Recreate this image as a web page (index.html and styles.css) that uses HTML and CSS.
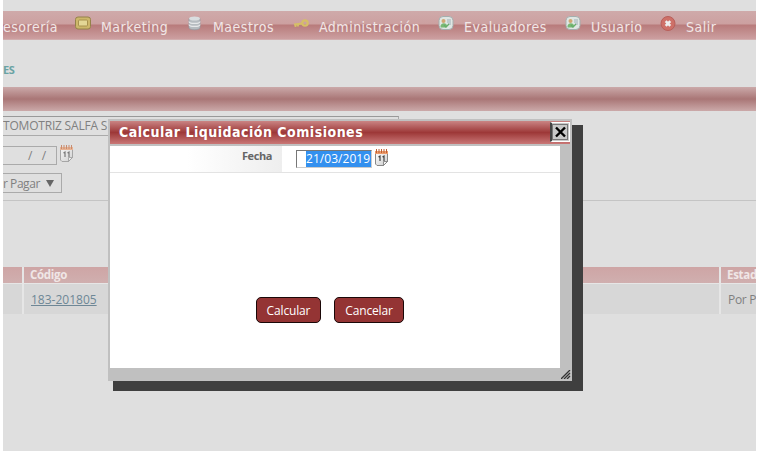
FILE: index.html
```
<!DOCTYPE html>
<html lang="es">
<head>
<meta charset="utf-8">
<title>Liquidación Comisiones</title>
<link rel="stylesheet" href="styles.css">
</head>
<body>
<svg class="defs" width="0" height="0">
  <defs>
    <linearGradient id="paper" x1="0" y1="0" x2="1" y2="1"><stop offset="0" stop-color="#fff"/><stop offset="1" stop-color="#ccc"/></linearGradient>
    <symbol id="calendar" viewBox="0 0 15 18">
      <path d="M1.500 3.500h12v9l-4 4h-6.500l-1.500-1.500z" fill="url(#paper)" stroke="#888"/>
      <path d="M13.500 12.500h-4v4z" fill="#f4f4f4" stroke="#777" stroke-width=".8"/>
      <path d="M1 2h13v3H1z" fill="#ee9c6c"/>
      <path d="M2.500 0v4M5 0v4M7.500 0v4M10 0v4M12.500 0v4" stroke="#bd5f33" stroke-width="1"/>
      <path d="M4.500 8l1.500-1v5M8.500 8l1.500-1v5" fill="none" stroke="#444" stroke-width="1.200"/>
    </symbol>
    <symbol id="card" viewBox="0 0 16 16">
      <rect x="1" y=".5" width="14" height="13" rx="4" fill="#dfe6e3" stroke="#a4afae"/>
      <circle cx="5.500" cy="5" r="2" fill="#d0a873"/>
      <path d="M2.500 11C2 7 8 6 9 9.500l-1 2H3z" fill="#79b874"/>
      <path d="M9 4h4M9 6h4M10 8h3" stroke="#9db0b6"/>
      <path d="M6 9l2 2 3-3" fill="none" stroke="#66ae6a" stroke-width="1.300"/>
    </symbol>
  </defs>
</svg>
<main class="app">
  <nav class="menu">
    <span class="item first"><b>esorería</b></span>
    <span class="item"><svg width="16" height="16" viewBox="0 0 16 16"><rect x=".5" y="1" width="15" height="12" rx="2.500" fill="#cdb76a" stroke="#94824a"/><rect x="3.500" y="4" width="9" height="6" rx="1" fill="#e3d796" stroke="#a8924e"/></svg><b>Marketing</b></span>
    <span class="item"><svg width="16" height="16" viewBox="0 0 16 16"><path d="M2 2.500v9c0 3 11 3 11 0v-9z" fill="#b6bcc0" stroke="#9299a0" stroke-width=".7"/><ellipse cx="7.500" cy="2.500" rx="5.500" ry="2" fill="#d9dddf"/><path d="M2 5.500c0 2.600 11 2.600 11 0M2 8.500c0 2.600 11 2.600 11 0" fill="none" stroke="#e6e8e9" stroke-width="1.200"/></svg><b>Maestros</b></span>
    <span class="item"><svg width="16" height="16" viewBox="0 0 16 16"><circle cx="12" cy="7" r="2.700" fill="none" stroke="#d6bf66" stroke-width="2.200"/><path d="M9.500 7.500L1 8.500M2.500 8.500v2.500M5 8v2.500" fill="none" stroke="#d6bf66" stroke-width="1.800"/></svg><b>Administración</b></span>
    <span class="item"><svg width="16" height="16"><use href="#card"/></svg><b>Evaluadores</b></span>
    <span class="item"><svg width="16" height="16"><use href="#card"/></svg><b>Usuario</b></span>
    <span class="item"><svg width="16" height="16" viewBox="0 0 16 16"><circle cx="8" cy="7.500" r="7" fill="#ce7068" stroke="#b85f5a"/><path d="M5.700 5.200l4.600 4.600M10.300 5.200l-4.600 4.600" stroke="#eee" stroke-width="2.600"/></svg><b>Salir</b></span>
  </nav>
  <div class="crumb">ES</div>
  <div class="band"></div>
  <section class="filters">
    <div class="company"><span>TOMOTRIZ SALFA S</span></div>
    <div class="daterow"><div class="date">/&nbsp; /</div><svg width="15" height="18"><use href="#calendar"/></svg></div>
    <div class="select"><span>r Pagar</span><svg width="8" height="7"><path d="M0 0h8L4 7z" fill="#666"/></svg></div>
  </section>
  <section class="grid">
    <div class="th"></div><div class="th"><span>Código</span></div><div class="th"><span>Estad</span></div>
    <div class="td"></div><div class="td"><a>183-201805</a></div><div class="td"><span>Por P</span></div>
  </section>
</main>
<div class="shadow"></div>
<section class="modal">
  <header class="title"><h1>Calcular Liquidación Comisiones</h1>
    <button class="close"><svg width="11" height="12" viewBox="0 0 11 12"><path d="M1 1.500l9 9M10 1.500l-9 9" stroke="#000" stroke-width="2.400"/></svg></button>
  </header>
  <div class="body">
    <div class="field"><label>Fecha</label><div class="input"><span>21/03/2019</span></div><svg width="15" height="18"><use href="#calendar"/></svg></div>
    <div class="actions"><button>Calcular</button><button>Cancelar</button></div>
  </div>
  <svg class="grip" width="10" height="9" viewBox="0 0 10 9"><path d="M0 9l9-9M3 9l6-6M6 9l3-3" stroke="#333" stroke-width="1.300"/></svg>
</section>
</body>
</html>
```
FILE: styles.css
```
* { box-sizing: border-box; }
body { margin: 0; width: 760px; height: 453px; overflow: hidden; background: #fff; font: 12px "Open Sans", sans-serif; letter-spacing: -.3px; }
svg { display: block; flex: none; }
.defs { position: absolute; }
.app { margin-left: 3px; width: 753px; height: 451px; padding-top: 11px; background: #dfdfdf; overflow: hidden; color: #808080; }

.menu { height: 29px; display: grid; grid-template-columns: 72px 112px 106px 145px 127px 95px 96px; background: linear-gradient(#cfaaaa 0, #cca0a0 13px, #b87b7b 14px, #cc9fa0 28px, #d6bcbc 29px); }
.item { display: flex; align-items: flex-start; gap: 11px; padding-top: 5px; white-space: nowrap; }
.item b { font: 14px/23px "DejaVu Sans Condensed", "DejaVu Sans", sans-serif; font-stretch: condensed; letter-spacing: .5px; color: #f1e7e7; }
.item svg + b { margin-left: -1px; }
.crumb { height: 47px; padding-top: 22px; font: bold 11px/16px "Open Sans", sans-serif; color: #6aa3a3; }
.band { height: 24px; background: linear-gradient(#cba9a9, #a97676 50%, #cba9a9); }

.filters { height: 90px; padding-top: 5px; border-bottom: 1px solid #c4c4c4; }
.company { width: 396px; height: 20px; border: 1px solid #aaa; border-left: 0; border-top-color: #999; line-height: 18px; white-space: nowrap; letter-spacing: -.2px; }
.daterow { display: flex; gap: 2px; margin-top: 9px; height: 20px; }
.date { width: 54px; height: 19px; margin-top: 1px; border: 1px solid #aaa; border-left: 0; padding-left: 25px; line-height: 17px; letter-spacing: 1px; }
.daterow svg { opacity: .65; }
.select { display: flex; align-items: center; justify-content: space-between; width: 59px; height: 20px; margin-top: 8px; padding-right: 7px; border: 1px solid #aaa; border-left: 0; white-space: nowrap; }
.select span { letter-spacing: -.45px; }

.grid { margin-top: 66px; display: grid; grid-template-columns: 19px 695px 35px; grid-template-rows: 16px 30px; column-gap: 2px; row-gap: 1px; background: #e6e6e6; width: 753px; }
.th { background: linear-gradient(#cea5a5, #d0afaf); padding-left: 6px; font-weight: bold; font-size: 11.500px; line-height: 15px; color: #f0e6e6; white-space: nowrap; }
.td { background: #d7d7d7; padding-left: 7px; line-height: 32px; white-space: nowrap; }
.td a { color: #6e8796; text-decoration: underline; letter-spacing: 0; }

.shadow { position: absolute; left: 113px; top: 125px; width: 470px; height: 266px; background: #3f3f3f; }
.modal { position: absolute; left: 108px; top: 119px; width: 464px; height: 262px; padding: 2px; background: #c0c0c0; }
.title { display: flex; justify-content: space-between; width: 460px; height: 23px; padding-left: 9px; background: linear-gradient(#ca8483, #9d3838 50%, #c97776); }
h1 { margin: 0; font: bold 14px/22px "DejaVu Sans Condensed", "DejaVu Sans", sans-serif; font-stretch: condensed; letter-spacing: .5px; color: #fff; white-space: nowrap; }
.close { width: 20px; height: 20px; margin-top: 1px; padding: 2px 3px; border: 1px solid #fff; border-left: 2px solid #444; outline: 1px solid #777; outline-offset: -3px; background: #c8c8c8; }
.body { width: 450px; height: 222px; margin-top: 2px; background: #fff; }
.field { display: flex; height: 27px; border-bottom: 1px solid #e3e3e3; }
label { width: 172px; padding-right: 10px; text-align: right; font: bold 11px/20px "Open Sans", sans-serif; letter-spacing: -.4px; color: #666; background: linear-gradient(90deg, #fff 45%, #eee); }
.input { width: 76px; height: 18px; margin: 4px 2px 0 14px; padding: 0 0 0 9px; border: 1px solid #777; border-right-color: #ccc; border-bottom-color: #ccc; }
.input span { display: block; height: 16px; background: #3390ef; color: #fff; line-height: 16px; letter-spacing: .05px; }
.field > svg { margin-top: 3px; }
.actions { display: flex; gap: 13px; padding: 124px 0 0 146px; }
.actions button { width: 65px; height: 26px; padding: 0; border: 1px solid #1a0808; border-radius: 5px; background: #943434; color: #fff; font: 12px "Open Sans", sans-serif; letter-spacing: -.15px; }
.actions button + button { width: 70px; }
.grip { position: absolute; right: 1px; bottom: 2px; }
```
